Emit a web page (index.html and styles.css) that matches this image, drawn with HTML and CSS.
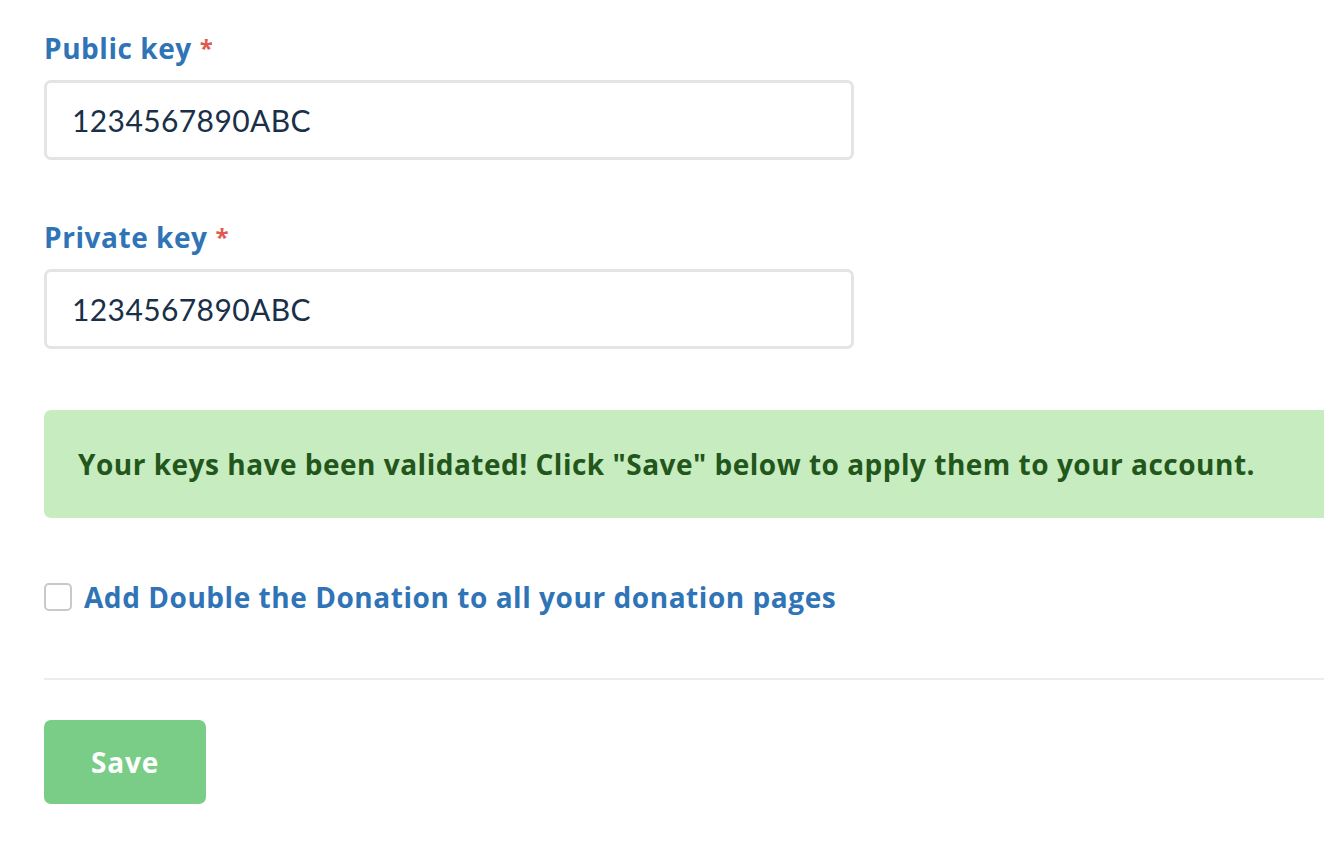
FILE: index.html
```html
<!DOCTYPE html>
<html>
<head>
<meta charset="utf-8">
<link rel="stylesheet" href="styles.css">
</head>
<body>
<div class="page">
  <div class="field">
    <label class="label">Public key <span class="req">*</span></label>
    <div class="input">1234567890ABC</div>
  </div>
  <div class="field field-2">
    <label class="label">Private key <span class="req">*</span></label>
    <div class="input">1234567890ABC</div>
  </div>
  <div class="alert">Your keys have been validated! Click "Save" below to apply them to your account.</div>
  <div class="check-row">
    <span class="checkbox"></span>
    <span class="check-label">Add Double the Donation to all your donation pages</span>
  </div>
  <div class="divider"></div>
  <button class="btn">Save</button>
</div>
</body>
</html>
```
FILE: styles.css
```css
html, body {
  margin: 0;
  padding: 0;
  background: #ffffff;
  overflow: hidden;
}
body {
  font-family: "Open Sans", Lato, sans-serif;
}
.page {
  padding: 32px 0 0 44px;
  width: 1400px;
}
.field {
  display: flex;
  flex-direction: column;
  align-items: flex-start;
}
.field-2 {
  margin-top: 61px;
}
.label {
  color: #2f74b6;
  font-weight: 700;
  font-size: 28px;
  letter-spacing: 0.55px;
  line-height: 32px;
  margin-bottom: 16px;
}
.req {
  color: #e0594f;
  font-size: 24px;
  vertical-align: top;
}
.input {
  box-sizing: border-box;
  width: 810px;
  height: 80px;
  border: 3px solid #e4e4e4;
  border-radius: 7px;
  padding: 0 25px;
  display: flex;
  align-items: center;
  font-family: Lato, sans-serif;
  font-size: 30px;
  letter-spacing: 0.4px;
  color: #1a2f48;
}
.alert {
  margin-top: 61px;
  height: 108px;
  box-sizing: border-box;
  background: #c6ecc0;
  border-radius: 7px 0 0 7px;
  color: #22561b;
  font-weight: 700;
  font-size: 28px;
  letter-spacing: 0.5px;
  display: flex;
  align-items: center;
  padding-left: 34px;
}
.check-row {
  margin-top: 60px;
  display: flex;
  align-items: center;
  gap: 12px;
}
.checkbox {
  box-sizing: border-box;
  width: 28px;
  height: 28px;
  border: 2px solid #c9c9c9;
  border-radius: 5px;
  background: #fff;
}
.check-label {
  color: #2f74b6;
  font-weight: 700;
  font-size: 28px;
  letter-spacing: 0.55px;
}
.divider {
  margin-top: 62px;
  height: 2px;
  background: #ececec;
}
.btn {
  margin-top: 40px;
  width: 162px;
  height: 84px;
  border: none;
  border-radius: 7px;
  background: #79cd86;
  color: #fff;
  font-family: "Open Sans", sans-serif;
  font-weight: 700;
  font-size: 28px;
  letter-spacing: 0.8px;
}
```
